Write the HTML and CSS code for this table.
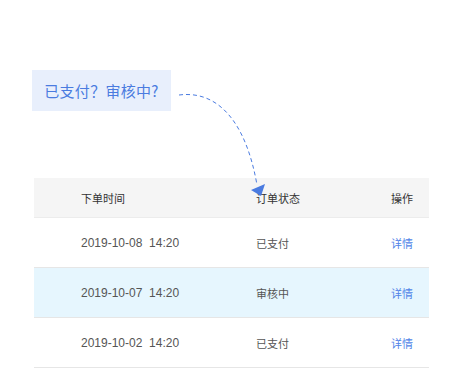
FILE: index.html
```html
<!DOCTYPE html>
<html lang="zh-CN">
<head>
    <meta charset="UTF-8">
    <meta name="viewport" content="width=device-width, initial-scale=1.0">
    <title>订单列表</title>
    <link rel="stylesheet" href="styles.css">
</head>
<body>
    <div class="page">
        <div class="hint">已支付？审核中?</div>

        <div class="orders">
            <div class="row head">
                <span>下单时间</span>
                <span>订单状态</span>
                <span>操作</span>
            </div>
            <div class="row">
                <span class="time">2019-10-08  14:20</span>
                <span>已支付</span>
                <a href="#">详情</a>
            </div>
            <div class="row active">
                <span class="time">2019-10-07  14:20</span>
                <span>审核中</span>
                <a href="#">详情</a>
            </div>
            <div class="row">
                <span class="time">2019-10-02  14:20</span>
                <span>已支付</span>
                <a href="#">详情</a>
            </div>
        </div>

        <!-- dashed pointer from the hint to the status column -->
        <svg class="pointer" width="460" height="370" viewBox="0 0 460 370">
            <path d="M179 95 C 218 90, 246 122, 257 185" fill="none" stroke="#4a7be0" stroke-width="1" stroke-dasharray="4 3"/>
            <polygon points="251,190 265,184 261,196" fill="#4a7be0"/>
        </svg>
    </div>
</body>
</html>
```

FILE: styles.css
```css
body {
    margin: 0;
    font-family: "Liberation Sans", "Noto Sans CJK SC", sans-serif;
    background: #fff;
}
.page {
    position: relative;
    width: 460px;
    height: 370px;
    padding-top: 70px;
    box-sizing: border-box;
}
.hint {
    margin-left: 32px;
    width: 139px;
    height: 41px;
    background: #e8effc;
    color: #4a7be0;
    font-family: "Noto Sans CJK SC", sans-serif;
    font-size: 15px;
    line-height: 41px;
    text-align: center;
    letter-spacing: 0.3px;
}
.orders {
    margin: 67px 0 0 34px;
    width: 395px;
}
.row {
    display: grid;
    grid-template-columns: 175px 135px 1fr;
    align-items: center;
    height: 49px;
    padding-left: 47px;
    border-bottom: 1px solid #e6e6e6;
    font-size: 12px;
    color: #555;
}
.row span {
    font-family: "Noto Sans CJK SC", sans-serif;
    font-size: 11px;
}
.row .time {
    font-family: "Liberation Sans", sans-serif;
    font-size: 12px;
    white-space: pre;
}
.head {
    height: 39px;
    background: #f5f5f5;
    border-bottom: 1px solid #ececec;
    color: #333;
}
.active {
    background: #e6f6fe;
}
.row a {
    font-family: "Noto Sans CJK SC", sans-serif;
    font-size: 11px;
    color: #4f83e8;
    text-decoration: none;
}
.pointer {
    position: absolute;
    left: 0;
    top: 0;
}
```
